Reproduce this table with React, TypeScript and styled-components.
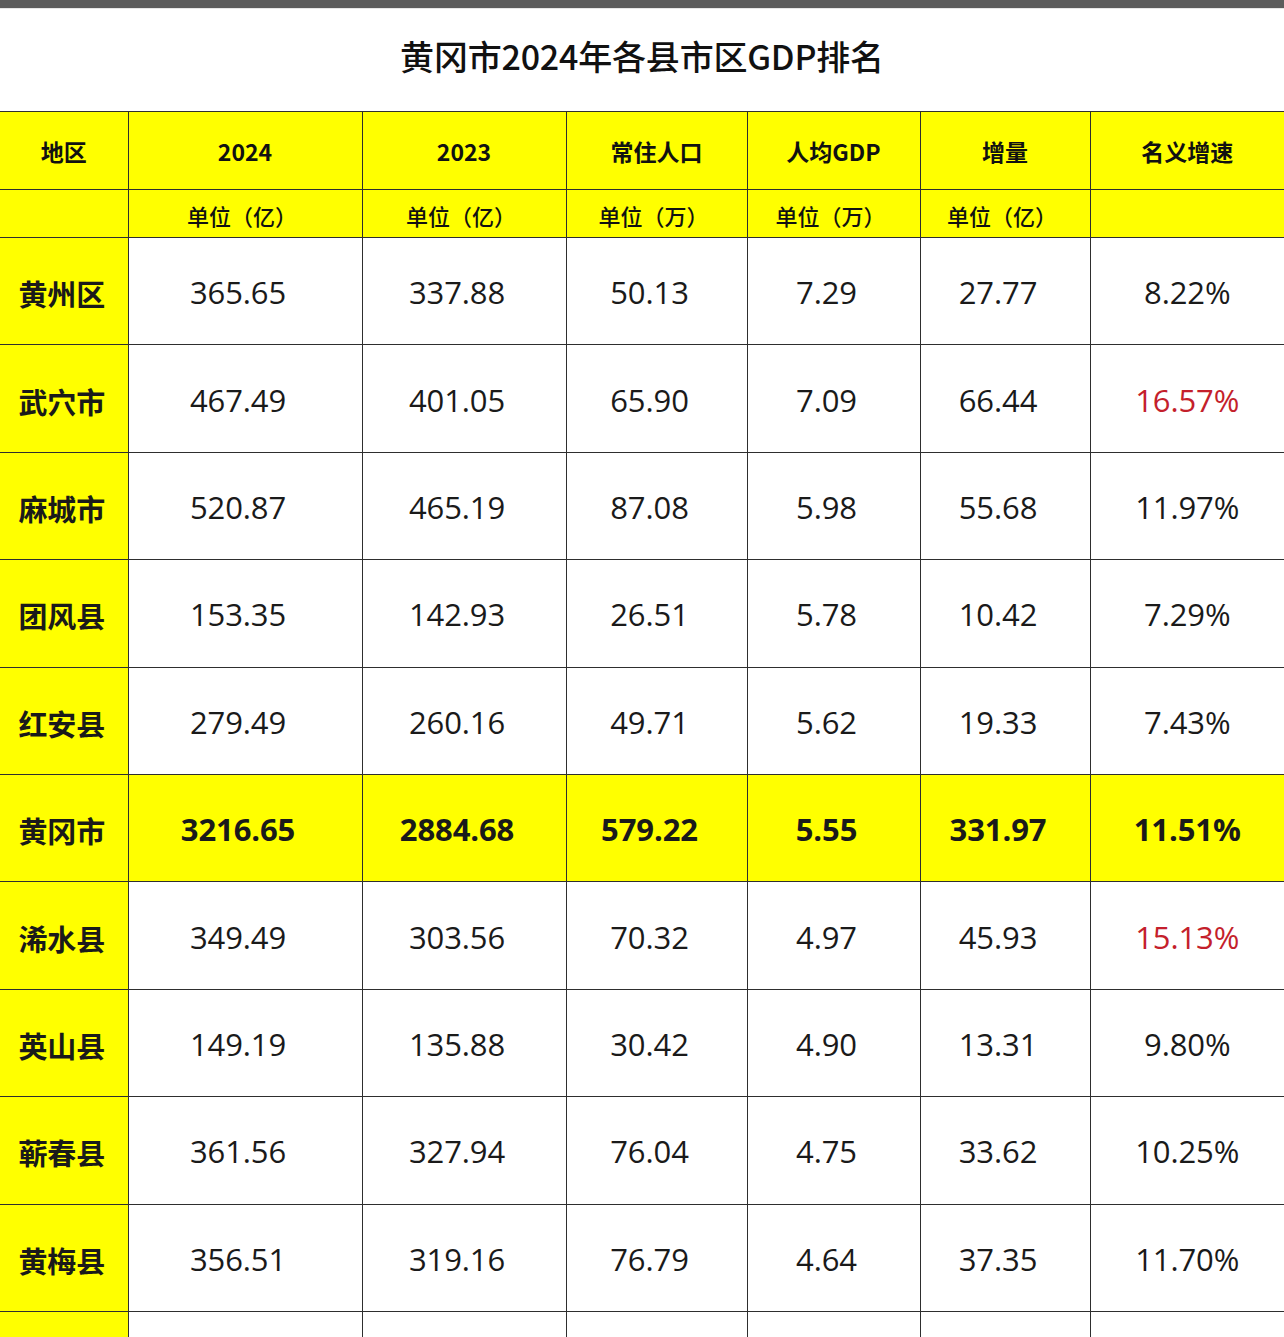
import React, { FC } from 'react';
import styled, { createGlobalStyle, css } from 'styled-components';

const GlobalStyle = createGlobalStyle`
  html, body {
    margin: 0;
    padding: 0;
    background: #ffffff;
    overflow: hidden;
  }
  body {
    font-family: "Noto Sans CJK SC", "Noto Sans", sans-serif;
    color: #1a1a1a;
  }
`;

const yellow = '#ffff00';
const lineColor = '#2e2e2e';

const Page = styled.div`
  width: 1284px;
  height: 1337px;
  overflow: hidden;
`;

const TopBar = styled.div`
  height: 8px;
  background: #5c5c5c;
  border-bottom: 1px solid #e6e6e6;
`;

const TitleArea = styled.div`
  height: 102px;
  display: flex;
  align-items: center;
  justify-content: center;
`;

const Title = styled.h1`
  margin: 0 0 10px;
  font-size: 34px;
  font-weight: 500;
  letter-spacing: -0.2px;
  color: #111111;
`;

const Table = styled.table`
  width: 1284px;
  table-layout: fixed;
  border-collapse: collapse;
  border-top: 1px solid ${lineColor};
`;

const Cell = styled.td<{ $tone?: 'yellow' | 'white'; $bold?: boolean; $red?: boolean }>`
  border: 1px solid ${lineColor};
  padding: 2px 14px 0 0;
  text-align: center;
  vertical-align: middle;
  background: ${p => (p.$tone === 'yellow' ? yellow : '#ffffff')};
  color: ${p => (p.$red ? '#c41f2c' : '#1a1a1a')};
  font-family: "Open Sans", "Noto Sans CJK SC", sans-serif;
  font-size: 31px;
  font-weight: ${p => (p.$bold ? 700 : 400)};
  letter-spacing: -0.1px;

  &:first-child {
    border-left: none;
    padding: 4px 4px 0 0;
    font-family: "Noto Sans CJK SC", sans-serif;
    font-size: 29px;
    font-weight: 700;
  }
  &:last-child {
    border-right: none;
    padding-right: 0;
  }
`;

const HeadCell = styled.th<{ $sub?: boolean }>`
  border: 1px solid ${lineColor};
  padding: 0;
  background: ${yellow};
  text-align: center;
  vertical-align: middle;
  color: #111111;
  font-family: "Noto Sans CJK SC", sans-serif;
  ${p =>
    p.$sub
      ? css`
          font-size: 22px;
          font-weight: 500;
          padding: 3px 6px 0 0;
        `
      : css`
          font-size: 23px;
          font-weight: 700;
        `}

  &:first-child {
    border-left: none;
  }
  &:last-child {
    border-right: none;
  }
`;

const HeadRow = styled.tr<{ $h: number }>`
  height: ${p => p.$h}px;
`;

const BodyRow = styled.tr`
  height: 107.4px;
`;

const columnWidths = [128, 234, 204, 181, 173, 170, 194];

const headers = ['地区', '2024', '2023', '常住人口', '人均GDP', '增量', '名义增速'];
const units = ['', '单位（亿）', '单位（亿）', '单位（万）', '单位（万）', '单位（亿）', ''];

interface Row {
  name: string;
  values: string[];
  total?: boolean;
  redRate?: boolean;
}

const rows: Row[] = [
  { name: '黄州区', values: ['365.65', '337.88', '50.13', '7.29', '27.77', '8.22%'] },
  { name: '武穴市', values: ['467.49', '401.05', '65.90', '7.09', '66.44', '16.57%'], redRate: true },
  { name: '麻城市', values: ['520.87', '465.19', '87.08', '5.98', '55.68', '11.97%'] },
  { name: '团风县', values: ['153.35', '142.93', '26.51', '5.78', '10.42', '7.29%'] },
  { name: '红安县', values: ['279.49', '260.16', '49.71', '5.62', '19.33', '7.43%'] },
  { name: '黄冈市', values: ['3216.65', '2884.68', '579.22', '5.55', '331.97', '11.51%'], total: true },
  { name: '浠水县', values: ['349.49', '303.56', '70.32', '4.97', '45.93', '15.13%'], redRate: true },
  { name: '英山县', values: ['149.19', '135.88', '30.42', '4.90', '13.31', '9.80%'] },
  { name: '蕲春县', values: ['361.56', '327.94', '76.04', '4.75', '33.62', '10.25%'] },
  { name: '黄梅县', values: ['356.51', '319.16', '76.79', '4.64', '37.35', '11.70%'] },
  { name: '', values: ['', '', '', '', '', ''] },
];

const App: FC = () => (
  <Page>
    <GlobalStyle />
    <TopBar />
    <TitleArea>
      <Title>黄冈市2024年各县市区GDP排名</Title>
    </TitleArea>
    <Table>
      <colgroup>
        {columnWidths.map((w, i) => (
          <col key={i} style={{ width: w }} />
        ))}
      </colgroup>
      <thead>
        <HeadRow $h={78}>
          {headers.map(h => (
            <HeadCell key={h}>{h}</HeadCell>
          ))}
        </HeadRow>
        <HeadRow $h={48}>
          {units.map((u, i) => (
            <HeadCell key={i} $sub>
              {u}
            </HeadCell>
          ))}
        </HeadRow>
      </thead>
      <tbody>
        {rows.map((row, ri) => (
          <BodyRow key={ri}>
            <Cell $tone="yellow">{row.name}</Cell>
            {row.values.map((v, vi) => (
              <Cell
                key={vi}
                $tone={row.total ? 'yellow' : 'white'}
                $bold={row.total}
                $red={row.redRate && vi === row.values.length - 1}
              >
                {v}
              </Cell>
            ))}
          </BodyRow>
        ))}
      </tbody>
    </Table>
  </Page>
);

export default App;
